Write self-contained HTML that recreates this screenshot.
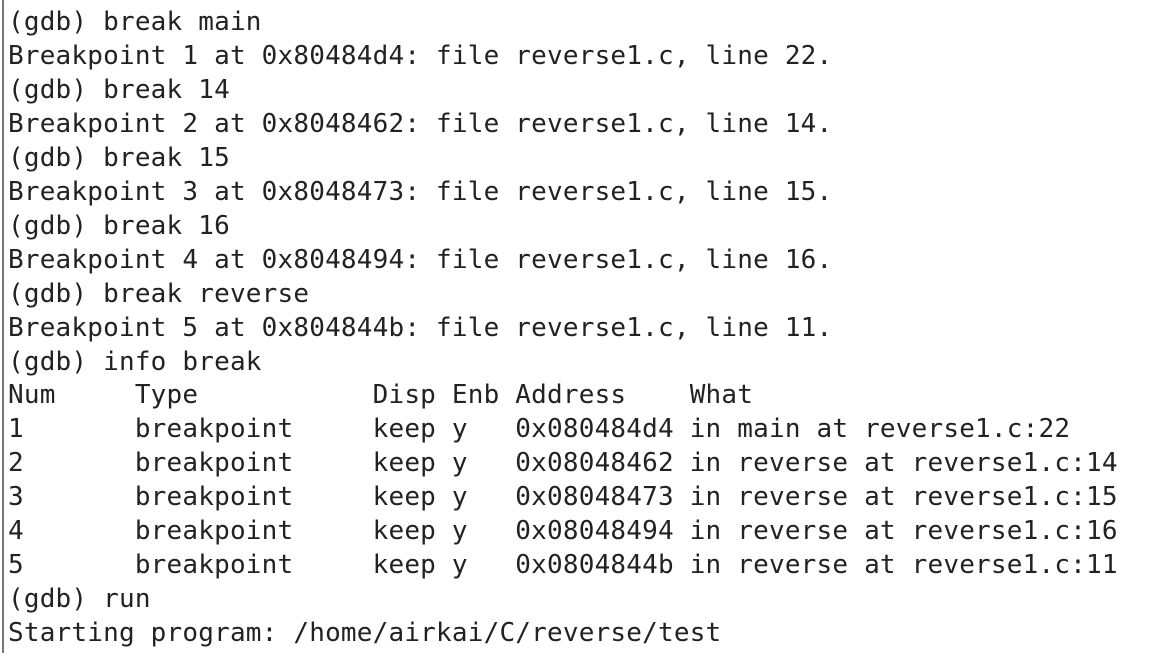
<html><head><style>
body{margin:0;background:#fff;width:1151px;height:653px;overflow:hidden;position:relative}
.b{position:absolute;left:2px;top:0;width:2px;height:653px;background:#777}
pre{position:absolute;left:8px;top:6px;margin:0;font-family:"DejaVu Sans Mono","Liberation Mono",monospace;font-size:26px;line-height:33.95px;color:#222;letter-spacing:0.2px}
</style></head><body><div class="b"></div><pre>(gdb) break main
Breakpoint 1 at 0x80484d4: file reverse1.c, line 22.
(gdb) break 14
Breakpoint 2 at 0x8048462: file reverse1.c, line 14.
(gdb) break 15
Breakpoint 3 at 0x8048473: file reverse1.c, line 15.
(gdb) break 16
Breakpoint 4 at 0x8048494: file reverse1.c, line 16.
(gdb) break reverse
Breakpoint 5 at 0x804844b: file reverse1.c, line 11.
(gdb) info break
Num     Type           Disp Enb Address    What
1       breakpoint     keep y   0x080484d4 in main at reverse1.c:22
2       breakpoint     keep y   0x08048462 in reverse at reverse1.c:14
3       breakpoint     keep y   0x08048473 in reverse at reverse1.c:15
4       breakpoint     keep y   0x08048494 in reverse at reverse1.c:16
5       breakpoint     keep y   0x0804844b in reverse at reverse1.c:11
(gdb) run
Starting program: /home/airkai/C/reverse/test</pre></body></html>
